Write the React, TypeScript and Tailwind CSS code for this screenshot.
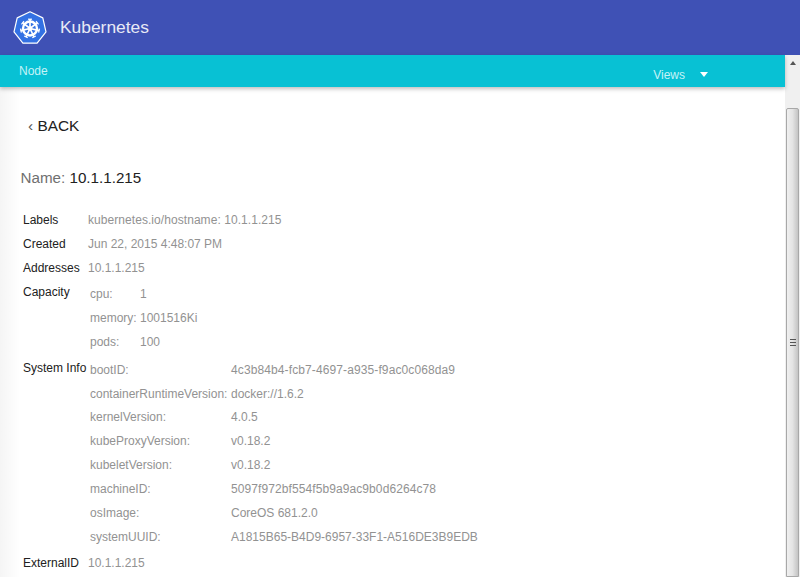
const SANS = "font-['Liberation_Sans',Arial,sans-serif]";

function Logo() {
  const spokes = [0, 51.4, 102.8, 154.3, 205.7, 257.1, 308.6];
  return (
    <svg width="34" height="34" viewBox="0 0 34 34" className="shrink-0 mt-[1px]">
      <polygon points="17,0.8 29.8,6.9 33,20.8 24.1,32.2 9.9,32.2 1,20.8 4.2,6.9" fill="#3371e3" stroke="#ffffff" strokeWidth="1.2" strokeLinejoin="round" />
      <circle cx="17" cy="17.5" r="7" fill="none" stroke="#fff" strokeWidth="2.4" />
      <circle cx="17" cy="17.5" r="2.3" fill="#fff" />
      {spokes.map((a) => (
        <g key={a} transform={`rotate(${a} 17 17.5)`}>
          <line x1="17" y1="17.5" x2="17" y2="8" stroke="#fff" strokeWidth="1.7" />
          <line x1="15" y1="8.2" x2="19" y2="8.2" stroke="#fff" strokeWidth="1.2" />
        </g>
      ))}
    </svg>
  );
}

function Row({ label, children, className = "" }: { label: string; children: React.ReactNode; className?: string }) {
  return (
    <div className={`flex ${className}`}>
      <div className="w-[65px] shrink-0 text-[#212121] leading-[24px]">{label}</div>
      <div className="text-[#929292] leading-[24px]">{children}</div>
    </div>
  );
}

function Sub({ rows, w }: { rows: [string, React.ReactNode][]; w: string }) {
  return (
    <div className="flex flex-col pl-[2px] pt-[2.9px]">
      {rows.map(([k, v]) => (
        <div key={k as string} className="flex leading-[23.9px]">
          <div className={w}>{k}</div>
          <div>{v}</div>
        </div>
      ))}
    </div>
  );
}

export default function App() {
  return (
    <div className={`h-[577px] w-[800px] overflow-hidden flex flex-col bg-white text-[12px] ${SANS}`}>
      <header className="h-[55px] shrink-0 bg-[#3f51b5] flex items-center pl-[13px] gap-[13px]">
        <Logo />
        <span className="text-[#e8eaf6] text-[17.4px] pb-[1px]">Kubernetes</span>
      </header>
      <div className="flex flex-1 min-h-0">
        <div className="flex-1 min-w-0 flex flex-col">
          <div className="h-[32px] shrink-0 bg-[#08c1d4] flex justify-between shadow-[0_2px_4px_rgba(0,0,0,0.25)] relative z-10 pl-[19px] pr-[77px] text-[#c5f3f7]">
            <span className="pt-[9px] leading-[14px]">Node</span>
            <span className="pt-[13px] leading-[14px] flex">
              Views
              <span className="ml-[15px] mt-[4px] w-0 h-0 border-l-[4.5px] border-r-[4.5px] border-t-[5px] border-l-transparent border-r-transparent border-t-white" />
            </span>
          </div>
          <main className="pl-[20.5px] flex-1 bg-gradient-to-r from-[#f5f5f5] to-white to-[20px]">
            <div className="pl-[7.5px] pt-[30px] text-[15.4px] leading-[18px] text-[#212121]">
              <span className="text-[#555]">‹</span> BACK
            </div>
            <div className="pt-[34px] text-[15.2px] leading-[18px] text-[#707070]">
              Name: <span className="text-[#212121]">10.1.1.215</span>
            </div>
            <div className="pt-[21px] pl-[2.5px]">
              <Row label="Labels"><span className="tracking-[0.06px]">kubernetes.io/hostname: 10.1.1.215</span></Row>
              <Row label="Created">Jun 22, 2015 4:48:07 PM</Row>
              <Row label="Addresses">10.1.1.215</Row>
              <Row label="Capacity">
                <Sub w="w-[50px]" rows={[["cpu:", "1"], ["memory:", "1001516Ki"], ["pods:", "100"]]} />
              </Row>
              <Row label="System Info" className="pt-[1.1px]">
                <Sub
                  w="w-[141px]"
                  rows={[
                    ["bootID:", <span className="tracking-[0.11px]">4c3b84b4-fcb7-4697-a935-f9ac0c068da9</span>],
                    ["containerRuntimeVersion:", "docker://1.6.2"],
                    ["kernelVersion:", "4.0.5"],
                    ["kubeProxyVersion:", "v0.18.2"],
                    ["kubeletVersion:", "v0.18.2"],
                    ["machineID:", <span className="tracking-[0.09px]">5097f972bf554f5b9a9ac9b0d6264c78</span>],
                    ["osImage:", "CoreOS 681.2.0"],
                    ["systemUUID:", "A1815B65-B4D9-6957-33F1-A516DE3B9EDB"],
                  ]}
                />
              </Row>
              <Row label="ExternalID" className="pt-[1.6px]">10.1.1.215</Row>
            </div>
          </main>
        </div>
        <aside className="w-[15px] shrink-0 bg-[#f0f0f0] flex flex-col items-stretch">
          <div className="h-[53px] flex justify-center pt-[6px] bg-[#f0f0f0]">
            <span className="w-0 h-0 border-l-[3.5px] border-r-[3.5px] border-b-[4px] border-l-transparent border-r-transparent border-b-[#555]" />
          </div>
          <div className="flex-1 mx-[1px] rounded-t-[2px] border border-[#a8a8a8] bg-gradient-to-r from-[#f0f0f0] via-[#e4e4e4] to-[#c4c4c4] flex flex-col items-center pt-[230px]">
            <div className="w-[6px] h-[7px] border-y border-[#555] relative">
              <div className="h-[1px] mt-[2px] bg-[#555]" />
            </div>
          </div>
        </aside>
      </div>
    </div>
  );
}
